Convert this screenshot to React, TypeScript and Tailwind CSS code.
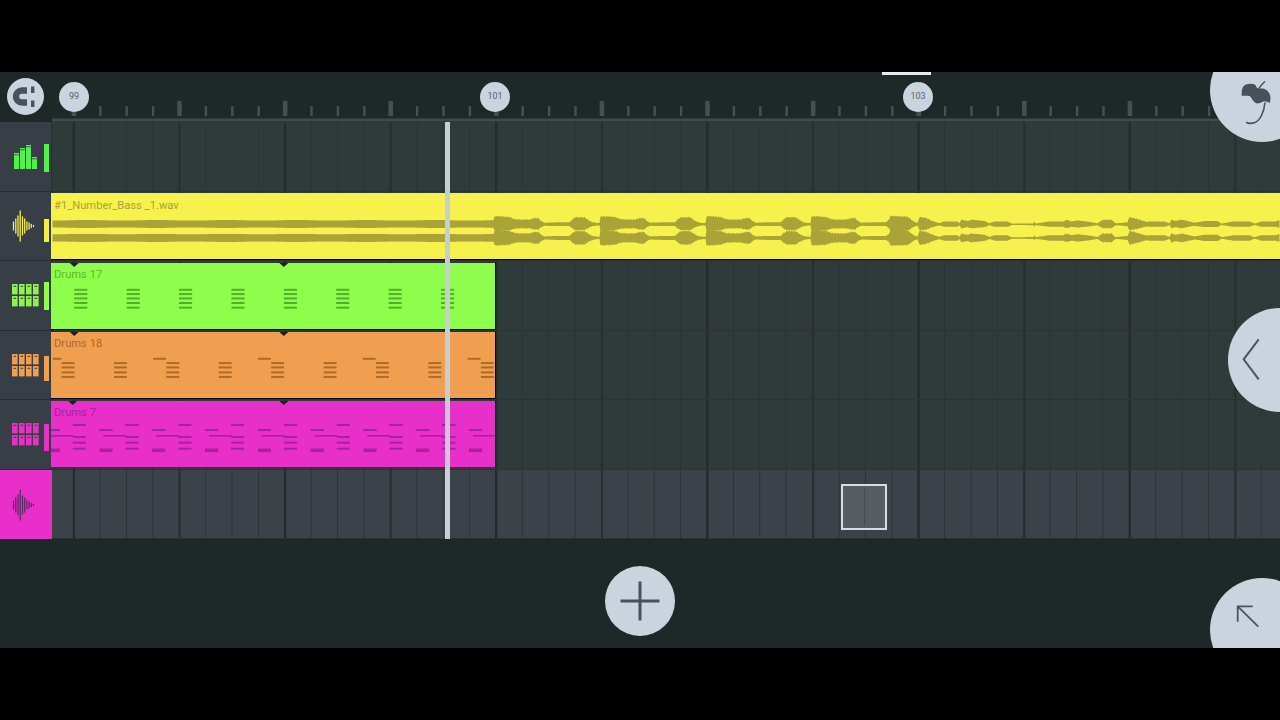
import React from "react";

function ampAt(pts: number[][], x: number) {
  for (let i = 0; i < pts.length - 1; i++) {
    if (x >= pts[i][0] && x <= pts[i + 1][0]) {
      const t = (x - pts[i][0]) / (pts[i + 1][0] - pts[i][0] || 1);
      return pts[i][1] + (pts[i + 1][1] - pts[i][1]) * t;
    }
  }
  return 1;
}

const BURST = [[0, 7.5], [3, 7.8], [15, 7], [20, 5], [25, 4.6], [35, 4.6], [40, 6], [44, 6], [47, 3], [50, 1.6], [62, 2], [75, 2], [78, 5], [81, 6.8], [90, 6.8], [94, 4], [98, 2], [103, 1.2], [106, 1.2]];
const TAIL = [[891, 8], [908, 7.4], [915, 2.4], [918, 1.4], [920, 7], [926, 6.4], [935, 2.5], [940, 1.2], [945, 2.8], [958, 2.8], [960, 1.2], [962, 4.5], [968, 3.2], [972, 4.5], [985, 3.2], [990, 1], [995, 2.8], [1008, 2.8], [1012, 0.8], [1022, 0.8], [1034, 1], [1035, 3], [1036, 0.8], [1050, 2.8], [1064, 2.8], [1067, 4.5], [1072, 2.8], [1078, 3.8], [1090, 2.4], [1098, 1], [1103, 4.4], [1112, 4.4], [1116, 1], [1128, 2], [1130, 7], [1138, 5], [1147, 2.4], [1150, 2.8], [1165, 2.8], [1170, 1], [1172, 4.5], [1176, 3.2], [1182, 4.5], [1195, 1.6], [1205, 3.2], [1218, 3.2], [1222, 0.8], [1234, 2.8], [1250, 2.8], [1255, 0.8], [1262, 2.8], [1276, 2.8], [1280, 4]];

const envelope = (x: number) => {
  if (x < 495) return 3.9 + 0.25 * Math.sin(x * 0.09);
  if (x < 891) return ampAt(BURST, (x - 495) % 105.6);
  return ampAt(TAIL, x);
};

const channel = (cy: number, up: number, down: number, seed: number) => {
  const top: string[] = [];
  const bot: string[] = [];
  for (let x = 53; x <= 1280; x += 1) {
    const a = envelope(x);
    const j = a > 4.2 ? 0.6 * Math.sin(x * 2.3 + seed) : 0;
    top.push(`${x} ${(cy - a * up - j).toFixed(1)}`);
    bot.unshift(`${x} ${(cy + a * down + j).toFixed(1)}`);
  }
  return `M${top.join("L")}L${bot.join("L")}Z`;
};

const stack = (x0: number, ys: number[], w: number) => ys.map((y) => <rect key={`${x0}-${y}`} x={x0} y={y} width={w} height={2} />);

const Tris = ({ y }: { y: number }) => (
  <g fill="#1c2020">
    <path d={`M69.200 ${y}h9l-4.500 4z`} />
    <path d={`M280.400 ${y}h9l-4.500 4z`} />
  </g>
);

const GreenNotes = () => (
  <svg viewBox="52 263 444 66" className="absolute inset-0 h-full w-full" fill="#52b028">
    <Tris y={263} />
    {[0, 1, 2, 3, 4, 5, 6, 7].map((i) => stack(73.7 + i * 52.8, [289, 293.3, 297.7, 302.3, 307], 13.2))}
  </svg>
);

const OrangeNotes = () => (
  <svg viewBox="52 332 444 66" className="absolute inset-0 h-full w-full" fill="#b06a28">
    <Tris y={332} />
    {[0, 1, 2, 3, 4, 5, 6, 7, 8].map((i) => stack(61 + i * 52.8, [362.3, 366.7, 371.7, 376.3], 13))}
    {[0, 1, 2, 3, 4].map((i) => <rect key={i} x={i === 0 ? 52 : 47.6 + i * 105.6} y={358} width={i === 0 ? 9 : 13} height={2} />)}
  </svg>
);

const MagentaNotes = () => (
  <svg viewBox="52 401 444 66" className="absolute inset-0 h-full w-full" fill="#a8219e">
    <Tris y={401} />
    {[0, 1, 2, 3, 4, 5, 6, 7].map((i) => stack(73.7 + i * 52.8, [424, 436, 441.7, 447.7], 13.2))}
    {[0, 1, 2, 3, 4, 5, 6, 7, 8].map((i) => {
      const x = 47.6 + i * 52.8;
      return (
        <g key={i}>
          <rect x={x} y={429} width={13.2} height={2} />
          <rect x={x + 4} y={435} width={23} height={1.6} />
          <rect x={x} y={448.500} width={13.2} height={3.6} />
        </g>
      );
    })}
  </svg>
);

const WaveIcon = ({ color }: { color: string }) => (
  <svg viewBox="0 0 24 32" className="h-[32px] w-[24px]" stroke={color} strokeWidth={1.3} strokeLinecap="round">
    {[[1.5, 4], [3.8, 7], [6, 10], [8.2, 15], [10.500, 9], [12.700, 7], [14.900, 4], [17.100, 3], [19.300, 1.5], [21.500, 0.6]].map(([x, h]) => (
      <line key={x} x1={x} x2={x} y1={16 - h} y2={16 + h} />
    ))}
  </svg>
);

const EqIcon = () => (
  <svg viewBox="0 0 24 24" className="h-[24px] w-[24px]">
    {[[0, 8], [6, 3], [12, 0], [18, 12]].map(([x, y]) => (
      <g key={x} fill="#54f04c">
        <rect x={x} y={y} width={5} height={1.4} />
        <rect x={x} y={y + 2.2} width={5} height={21.8 - y} />
      </g>
    ))}
  </svg>
);

const PadsIcon = ({ color }: { color: string }) => (
  <svg viewBox="0 0 28 23" className="h-[23px] w-[28px]">
    {[0, 7, 14, 21].map((x) =>
      [0, 12].map((y) => (
        <g key={`${x}${y}`}>
          <rect x={x} y={y} width={5.6} height={10.4} fill={color} />
          <rect x={x + 1.5} y={y + 1.8} width={2.6} height={1} fill="#3a3f44" />
        </g>
      ))
    )}
  </svg>
);

const Side = ({ children, meter }: { children: React.ReactNode; meter: React.ReactNode }) => (
  <div className="flex w-[52px] shrink-0 items-center border-b border-r border-[#272d30] bg-[#383e46] pl-[12px]">
    <div className="flex w-[32px] shrink-0 items-center">{children}</div>
    {meter}
  </div>
);

const Lane = ({ children, last }: { children?: React.ReactNode; last?: boolean }) => (
  <div
    className={`relative min-w-0 flex-1 border-b border-[#2a3232] bg-[image:linear-gradient(90deg,#242b2c_2px,transparent_2px),linear-gradient(90deg,#272e2f_1.5px,transparent_1.5px),linear-gradient(90deg,#2b3334_1px,transparent_1px)] bg-[size:211.2px_100%,105.6px_100%,26.4px_100%] bg-[position:20.7px_0,21px_0,21.2px_0] ${last ? "bg-[#3b424a]" : "bg-[#313a3a]"}`}
  >
    {children}
  </div>
);

const Ticks = () => (
  <svg viewBox="52 72 1228 50" className="h-[50px] w-full">
    {Array.from({ length: 47 }, (_, i) => {
      const x = 73.7 + i * 26.4;
      const major = i % 4 === 0;
      return <rect key={i} x={major ? x - 2 : x - 1} y={major ? 101 : 106} width={major ? 4.5 : 2.4} height={major ? 15 : 10} fill="#465050" />;
    })}
    <rect x={52} y={118.500} width={1228} height={3} fill="#414a4b" />
  </svg>
);

const Marker = ({ label, pos }: { label: string; pos: string }) => (
  <div className={`absolute top-[10px] flex h-[30px] w-[30px] items-center justify-center rounded-full bg-[#cbd3df] text-[9px] text-[#59636e] ${pos}`}>{label}</div>
);

export default function App() {
  return (
    <div className="flex h-[720px] w-[1280px] flex-col overflow-hidden bg-black font-['Roboto',sans-serif]">
      <div className="h-[72px] shrink-0" />
      <div className="relative flex h-[576px] shrink-0 flex-col overflow-hidden bg-[#1f2828]">
        <div className="absolute left-[882px] top-0 h-[2.5px] w-[49px] bg-[#e8ecef]" />

        {/* ruler */}
        <div className="relative flex h-[50px] shrink-0">
          <div className="flex w-[52px] shrink-0 items-start pl-[7px] pt-[6px]">
            <div className="flex h-[37px] w-[37px] items-center justify-center rounded-full bg-[#cbd3df]">
              <svg viewBox="0 0 37 37" className="h-[37px] w-[37px]">
                <path d="M20 12.500h-5a6 6 0 0 0 0 12h5" fill="none" stroke="#49525a" strokeWidth={6.4} />
                <rect x={24} y={8.5} width={3.4} height={6.5} fill="#49525a" />
                <rect x={24} y={22.5} width={3.4} height={6.5} fill="#49525a" />
              </svg>
            </div>
          </div>
          <div className="min-w-0 flex-1">
            <Ticks />
          </div>
          <Marker label="99" pos="left-[59px]" />
          <Marker label="101" pos="left-[480px]" />
          <Marker label="103" pos="left-[903px]" />
        </div>

        {/* tracks */}
        <div className="relative flex shrink-0 flex-col">
          <div className="flex h-[70px]">
            <Side meter={<div className="mt-[2px] h-[28px] w-[5px] bg-[#54f04c]" />}>
              <div className="ml-[2px]"><EqIcon /></div>
            </Side>
            <Lane />
          </div>

          <div className="flex h-[69px]">
            <Side meter={<div className="mt-[8px] h-[23px] w-[5px] bg-[#f4ee4d]" />}>
              <WaveIcon color="#f4ee4d" />
            </Side>
            <Lane>
              <div className="relative -ml-px mt-px h-[66.5px] border-b-[1.5px] border-black bg-[#f6f14c] pl-[3px] pt-[6px]">
                <svg viewBox="52 193 1228 66" className="absolute inset-0 h-[66px] w-[1229px]" fill="#a9a338">
                  <path d={channel(224.4, 1.05, 0.85, 0)} />
                  <path d={channel(238, 1.0, 0.95, 1.7)} />
                </svg>
                <span className="relative block text-[11.2px] leading-[14px] text-[#a9a338]">#1_Number_Bass _1.wav</span>
              </div>
            </Lane>
          </div>

          <div className="flex h-[70px]">
            <Side meter={<div className="h-[28px] w-[5px] bg-[#92fb4e]" />}>
              <PadsIcon color="#8ff24c" />
            </Side>
            <Lane>
              <div className="relative -ml-px mt-[2px] h-[66.5px] w-[445px] border-b-[1.5px] border-r border-black bg-[#8ffd4b] pl-[3px] pt-[5px]">
                <GreenNotes />
                <span className="relative block text-[11.2px] leading-[14px] text-[#5cba2c]">Drums 17</span>
              </div>
            </Lane>
          </div>

          <div className="flex h-[69px]">
            <Side meter={<div className="mt-[6px] h-[25px] w-[5px] bg-[#ef9f4f]" />}>
              <PadsIcon color="#ef9f4f" />
            </Side>
            <Lane>
              <div className="relative -ml-px mt-px h-[66.5px] w-[445px] border-b-[1.5px] border-r border-black bg-[#ef9f4f] pl-[3px] pt-[5px]">
                <OrangeNotes />
                <span className="relative block text-[11.2px] leading-[14px] text-[#b06a28]">Drums 18</span>
              </div>
            </Lane>
          </div>

          <div className="flex h-[70px]">
            <Side meter={<div className="mt-[5px] h-[27px] w-[5px] bg-[#e531c6]" />}>
              <PadsIcon color="#e531c6" />
            </Side>
            <Lane>
              <div className="relative -ml-px mt-px h-[66px] w-[445px] border-r border-black bg-[#e92fc9] pl-[3px] pt-[5px]">
                <MagentaNotes />
                <span className="relative block text-[11.2px] leading-[14px] text-[#a8219e]">Drums 7</span>
              </div>
            </Lane>
          </div>

          <div className="flex h-[69px]">
            <div className="flex w-[52px] shrink-0 items-center bg-[#e92fc9] pl-[12px]">
              <WaveIcon color="#5f2a66" />
            </div>
            <Lane last>
              <div className="absolute left-[789px] top-[14px] flex h-[46px] w-[46px] justify-center border-2 border-[#d8dde2] bg-[#575e62] py-[2px]">
                <div className="w-px bg-[#464c50]" />
              </div>
            </Lane>
          </div>

          <div className="absolute bottom-0 left-[445px] top-0 w-[5px] bg-[#c6ccd8]" />
        </div>

        {/* bottom bar */}
        <div className="flex flex-1 items-center justify-center pt-[14px]">
          <div className="flex h-[70px] w-[70px] items-center justify-center rounded-full bg-[#cbd3df]">
            <svg viewBox="0 0 40 40" className="h-[40px] w-[40px]" stroke="#46515a" strokeWidth={3}>
              <line x1={0.5} y1={20} x2={39.5} y2={20} />
              <line x1={20} y1={0.5} x2={20} y2={39.5} />
            </svg>
          </div>
        </div>

        {/* round overlay buttons */}
        <div className="absolute left-[1210px] top-[-34px] h-[104px] w-[104px] rounded-full bg-[#cbd3df]">
          <svg viewBox="1210 38 104 104" className="h-[104px] w-[104px]">
            <path d="M1241.700 92c0-5 3-8 7-8 4-.5 7 0 8 3.500 1 1.500 2.500 1 4 1 4-.5 8 2 9.500 7 .5 2 .5 5-.5 7.500-2.500-1-4.500-2-6.500-1.500-2.500 1.500-5.500 2.500-7.500 1.500-3-1.500-4-5.500-6-7-3-.5-6-.5-8 0z" fill="#46515a" />
            <path d="M1265 81.700c-3 2-5 5-7 8.500" stroke="#46515a" strokeWidth={1.4} fill="none" />
            <path d="M1265 102.500c-1 10-5 18-10 20-3 1-7 .8-8.800-.3" stroke="#46515a" strokeWidth={1.6} fill="none" />
          </svg>
        </div>
        <div className="absolute left-[1228px] top-[236px] h-[104px] w-[104px] rounded-full bg-[#cbd3df]">
          <svg viewBox="1228 308 104 104" className="h-[104px] w-[104px]" fill="none" stroke="#4a5560" strokeWidth={2}>
            <path d="M1258.700 339.300l-15 20 15 20" />
          </svg>
        </div>
        <div className="absolute left-[1210px] top-[506px] h-[104px] w-[104px] rounded-full bg-[#cbd3df]">
          <svg viewBox="1210 578 104 104" className="h-[104px] w-[104px]" fill="none" stroke="#4a5560" strokeWidth={1.8}>
            <path d="M1252.700 606.300h-15v15.400M1237.700 606.300l20.600 20.400" />
          </svg>
        </div>
      </div>
      <div className="h-[72px] shrink-0" />
    </div>
  );
}
